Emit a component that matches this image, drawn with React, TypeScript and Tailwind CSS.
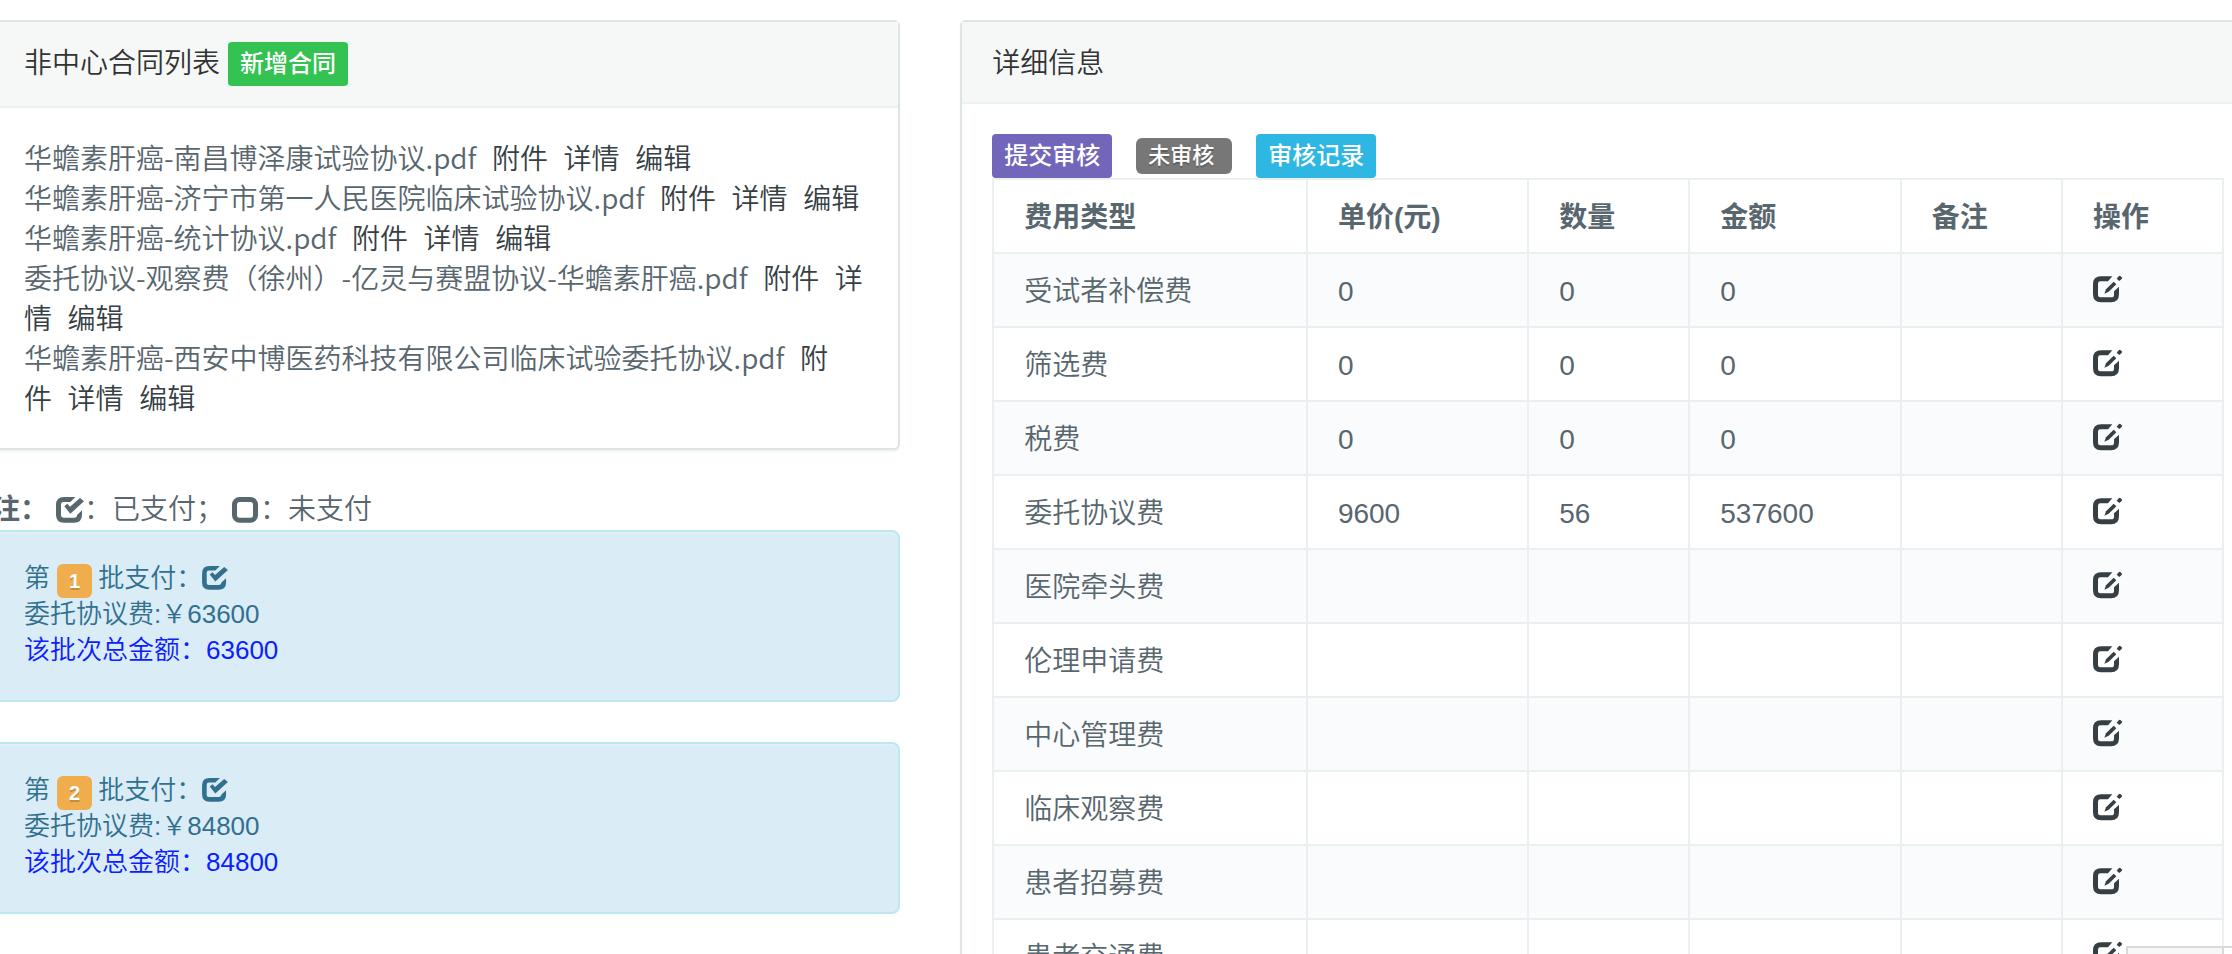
import { Fragment } from "react";

const contracts = [
	"华蟾素肝癌-南昌博泽康试验协议.pdf",
	"华蟾素肝癌-济宁市第一人民医院临床试验协议.pdf",
	"华蟾素肝癌-统计协议.pdf",
	"委托协议-观察费（徐州）-亿灵与赛盟协议-华蟾素肝癌.pdf",
	"华蟾素肝癌-西安中博医药科技有限公司临床试验委托协议.pdf",
];

const contractActions = ["附件", "详情", "编辑"];

const payments = [
	{ batch: 1, amount: 63600 },
	{ batch: 2, amount: 84800 },
];

const columns = [
	{ label: "费用类型", width: "w-[25.5%]" },
	{ label: "单价(元)", width: "w-[18%]" },
	{ label: "数量", width: "w-[13.1%]" },
	{ label: "金额", width: "w-[17.2%]" },
	{ label: "备注", width: "w-[13.1%]" },
	{ label: "操作", width: "w-[13.1%]" },
];

const fees = [
	{ name: "受试者补偿费", price: "0", count: "0", total: "0" },
	{ name: "筛选费", price: "0", count: "0", total: "0" },
	{ name: "税费", price: "0", count: "0", total: "0" },
	{ name: "委托协议费", price: "9600", count: "56", total: "537600" },
	{ name: "医院牵头费", price: "", count: "", total: "" },
	{ name: "伦理申请费", price: "", count: "", total: "" },
	{ name: "中心管理费", price: "", count: "", total: "" },
	{ name: "临床观察费", price: "", count: "", total: "" },
	{ name: "患者招募费", price: "", count: "", total: "" },
	{ name: "患者交通费", price: "", count: "", total: "" },
];

const cell = "border-2 border-[#eaeff0] px-[30px] pt-[18px] pb-3.5";

function CheckIcon({ className }: { className: string }) {
	return (
		<svg viewBox="0 0 84 78" fill="currentColor" className={className} aria-hidden="true">
			<path d="M58 0H24Q0 0 0 24V54Q0 77 24 77H54Q78 77 78 54V40L63 54Q63 62 55 62H22Q15 62 15 55V22Q15 15 22 15H43Z" />
			<path d="M25 28L34 20L42 29L72 3L84 13L43 50Z" />
		</svg>
	);
}

function UncheckedIcon({ className }: { className: string }) {
	return (
		<svg viewBox="0 0 84 78" fill="none" stroke="currentColor" strokeWidth="15" className={className} aria-hidden="true">
			<rect x="7.5" y="7.5" width="63" height="62" rx="15" />
		</svg>
	);
}

function EditIcon() {
	return (
		<svg viewBox="0 0 90 84" fill="currentColor" className="h-7 w-[30px]" aria-hidden="true">
			<path d="M58 4H24Q0 4 0 28V58Q0 82 24 82H54Q78 82 78 58V35L63 49V59Q63 67 55 67H22Q15 67 15 60V26Q15 19 22 19H45Z" />
			<path d="M34 56L39 43L62 20L70 28L47 50Z" />
			<path d="M71 11L77 4Q80 1 83 4L86 7Q88 10 86 12L79 18Z" />
		</svg>
	);
}

function ContractPanel() {
	return (
		<section className="rounded-md border-2 border-[#dee5e7] bg-white shadow-[0_2px_2px_rgba(0,0,0,0.05)]">
			<header className="flex items-center gap-2 border-b-2 border-[#edf1f2] bg-[#f6f8f8] px-[30px] py-5 text-[#333]">
				<h2>非中心合同列表</h2>
				<button type="button" className="h-11 rounded-sm bg-[#34c252] px-3 text-2xl font-medium text-white">
					新增合同
				</button>
			</header>
			<ul className="px-[30px] pt-8 pb-7">
				{contracts.map((name) => (
					<li key={name}>
						<span className="font-['Noto_Sans_CJK_SC',sans-serif] leading-none">{name}</span>
						{contractActions.map((action) => (
							<Fragment key={action}>
								{"\u00a0\u00a0"}
								<a href="#" className="text-[#363f44]">{action}</a>
							</Fragment>
						))}
					</li>
				))}
			</ul>
		</section>
	);
}

function PaymentAlert({ batch, amount }: { batch: number; amount: number }) {
	return (
		<div className="mb-10 rounded-lg border-2 border-[#bce8f1] bg-[#daecf6] px-[30px] pt-7 pb-8 text-[26px] leading-9 text-[#31708f] shadow-[inset_0_2px_0_rgba(255,255,255,0.2)]">
			<p className="flex h-9 items-center">
				第
				<span className="mt-1.5 mr-1.5 ml-[7px] h-[34px] rounded-md bg-[#f0ad4e] px-3 text-xl leading-[34px] font-bold text-white [text-shadow:0_2px_0_rgba(0,0,0,0.2)]">
					{batch}
				</span>
				批支付：
				<CheckIcon className="h-6 w-[26px]" />
			</p>
			<p>委托协议费:￥{amount}</p>
			<p className="text-[#0a20ff]">该批次总金额：{amount}</p>
		</div>
	);
}

function DetailPanel() {
	return (
		<section className="rounded-md border-2 border-[#dee5e7] bg-white shadow-[0_2px_2px_rgba(0,0,0,0.05)]">
			<header className="border-b-2 border-[#edf1f2] bg-[#f6f8f8] px-[30px] pt-[22px] pb-[18px] text-[#333]">
				<h2>详细信息</h2>
			</header>
			<div className="p-[30px]">
				<div className="flex items-center gap-6">
					<button type="button" className="h-11 rounded-sm bg-[#7266ba] px-3 text-2xl font-medium text-white">
						提交审核
					</button>
					<span className="h-9 rounded-md bg-[#777] pr-[18px] pl-3 text-[22px] leading-9 font-medium text-white [text-shadow:0_2px_0_rgba(0,0,0,0.2)]">
						未审核
					</span>
					<button type="button" className="h-11 rounded-sm bg-[#2fb7e4] px-3 text-2xl font-medium text-white">
						审核记录
					</button>
				</div>
				<table className="w-full table-fixed border-collapse">
					<thead>
						<tr>
							{columns.map((column) => (
								<th key={column.label} scope="col" className={`${cell} text-left font-bold ${column.width}`}>
									{column.label}
								</th>
							))}
						</tr>
					</thead>
					<tbody>
						{fees.map((fee) => (
							<tr key={fee.name} className="odd:bg-[#fafbfc]">
								<td className={cell}>{fee.name}</td>
								<td className={cell}>{fee.price}</td>
								<td className={cell}>{fee.count}</td>
								<td className={cell}>{fee.total}</td>
								<td className={cell} />
								<td className={cell}>
									<a href="#" aria-label={`编辑${fee.name}`} className="flex h-10 items-start pt-[3px] text-[#363f44]">
										<EditIcon />
									</a>
								</td>
							</tr>
						))}
					</tbody>
				</table>
			</div>
		</section>
	);
}

export default function App() {
	return (
		<div className="h-screen overflow-hidden bg-white pt-5 font-['Liberation_Sans','Noto_Sans_CJK_SC',sans-serif] text-[28px] leading-10 font-[350] text-[#58666e]">
			<main className="-mr-6 -ml-2 grid grid-cols-12 items-start gap-[60px]">
				<div className="col-span-5">
					<ContractPanel />
					<p className="mt-10 flex items-center">
						<strong className="mr-2 font-bold">注：</strong>
						<CheckIcon className="h-[26px] w-7" />
						：已支付；
						<UncheckedIcon className="ml-2 h-[26px] w-7" />
						：未支付
					</p>
					{payments.map((payment) => (
						<PaymentAlert key={payment.batch} {...payment} />
					))}
				</div>
				<div className="col-span-7">
					<DetailPanel />
				</div>
			</main>
			<div className="fixed right-0 bottom-0 flex h-2 w-[106px] border-t-2 border-l-2 border-[#d9d9d9] bg-white">
				<div className="mr-2 grow border-r-2 border-[#d9d9d9] bg-[#f7f7f7]" />
			</div>
		</div>
	);
}
